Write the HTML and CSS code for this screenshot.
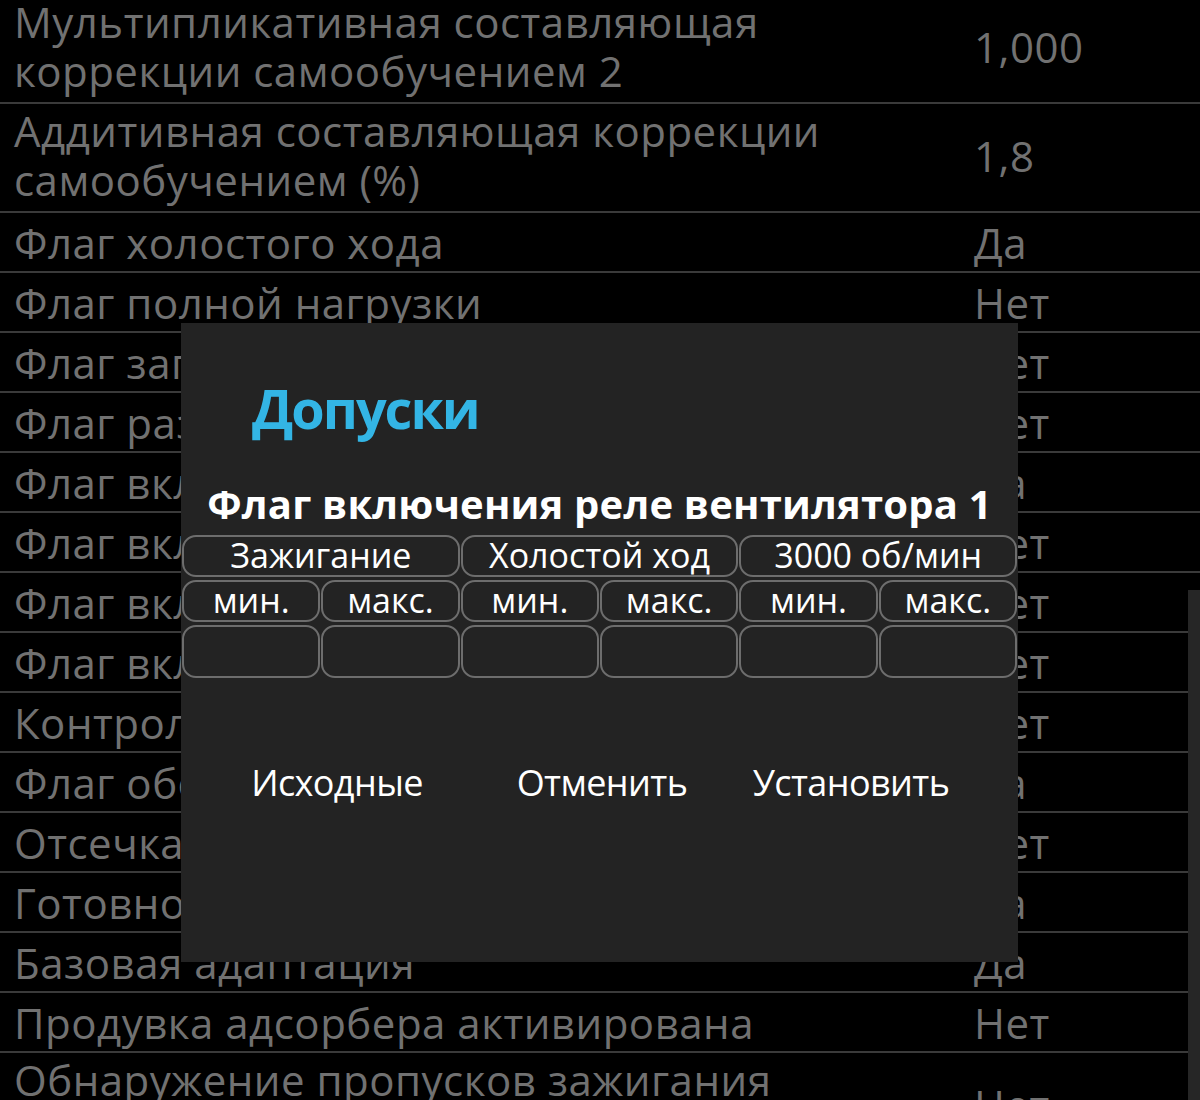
FILE: index.html
```html
<!DOCTYPE html>
<html lang="ru">
<head>
<meta charset="utf-8">
<title>Допуски</title>
<link rel="stylesheet" href="styles.css">
</head>
<body>
<div class="list">
  <div class="row tall"><div class="label">Мультипликативная составляющая<br>коррекции самообучением 2</div><div class="value">1,000</div></div>
  <div class="row tall"><div class="label">Аддитивная составляющая коррекции<br>самообучением (%)</div><div class="value">1,8</div></div>
  <div class="row"><div class="label">Флаг холостого хода</div><div class="value">Да</div></div>
  <div class="row"><div class="label">Флаг полной нагрузки</div><div class="value">Нет</div></div>
  <div class="row"><div class="label">Флаг запрета подачи топлива</div><div class="value">Нет</div></div>
  <div class="row"><div class="label">Флаг разрешения продувки</div><div class="value">Нет</div></div>
  <div class="row"><div class="label">Флаг включения реле бензонасоса</div><div class="value">Да</div></div>
  <div class="row"><div class="label">Флаг включения реле вентилятора 1</div><div class="value">Нет</div></div>
  <div class="row"><div class="label">Флаг включения реле вентилятора 2</div><div class="value">Нет</div></div>
  <div class="row"><div class="label">Флаг включения кондиционера</div><div class="value">Нет</div></div>
  <div class="row"><div class="label">Контроль детонации</div><div class="value">Нет</div></div>
  <div class="row"><div class="label">Флаг обогащения по ускорению</div><div class="value">Да</div></div>
  <div class="row"><div class="label">Отсечка топлива</div><div class="value">Нет</div></div>
  <div class="row"><div class="label">Готовность датчика кислорода</div><div class="value">Да</div></div>
  <div class="row"><div class="label">Базовая адаптация</div><div class="value">Да</div></div>
  <div class="row"><div class="label">Продувка адсорбера активирована</div><div class="value">Нет</div></div>
  <div class="row tall"><div class="label">Обнаружение пропусков зажигания<br>активировано</div><div class="value">Нет</div></div>
</div>
<div class="scrollbar"></div>

<div class="dialog">
  <div class="title">Допуски</div>
  <div class="subtitle">Флаг включения реле вентилятора 1</div>
  <div class="table">
    <div class="cell head span2">Зажигание</div>
    <div class="cell head span2">Холостой ход</div>
    <div class="cell head span2">3000 об/мин</div>
    <div class="cell head">мин.</div>
    <div class="cell head">макс.</div>
    <div class="cell head">мин.</div>
    <div class="cell head">макс.</div>
    <div class="cell head">мин.</div>
    <div class="cell head">макс.</div>
    <div class="cell input"></div>
    <div class="cell input"></div>
    <div class="cell input"></div>
    <div class="cell input"></div>
    <div class="cell input"></div>
    <div class="cell input"></div>
  </div>
  <div class="buttons">
    <div class="btn">Исходные</div>
    <div class="btn">Отменить</div>
    <div class="btn">Установить</div>
  </div>
</div>
</body>
</html>
```
FILE: styles.css
```css
html, body {
  margin: 0;
  padding: 0;
  background: #000;
}
body {
  width: 1200px;
  height: 1100px;
  overflow: hidden;
  position: relative;
  font-family: "Open Sans", "Noto Sans", sans-serif;
}
.list {
  margin-top: -5px;
}
.row {
  display: grid;
  grid-template-columns: 974px 1fr;
  align-items: center;
  padding: 5px 0 4px;
  border-bottom: 2px solid #3a3a3a;
  color: #717171;
  font-size: 42px;
  line-height: 49px;
  letter-spacing: 0.5px;
  white-space: nowrap;
}
.row.tall {
  padding: 2px 0 7px;
}
.label {
  padding-left: 14px;
}
.scrollbar {
  position: absolute;
  right: 0;
  top: 590px;
  width: 12px;
  height: 510px;
  background: #262626;
}
.dialog {
  position: absolute;
  left: 181px;
  top: 323px;
  width: 837px;
  height: 639px;
  background: #232323;
  display: flex;
  flex-direction: column;
}
.title {
  margin: 57px 0 0 71px;
  color: #33b5e5;
  font-weight: 700;
  font-size: 54px;
  line-height: 56px;
  letter-spacing: -2px;
}
.subtitle {
  margin-top: 48px;
  color: #fff;
  font-weight: 700;
  font-size: 40px;
  line-height: 40px;
  letter-spacing: 0.2px;
  text-align: center;
  white-space: nowrap;
}
.table {
  margin: 11px 1px 0;
  display: grid;
  grid-template-columns: repeat(6, 1fr);
  grid-template-rows: 42px 42px 53px;
  gap: 3px 1px;
}
.cell {
  border: 2px solid #6d6d6d;
  border-radius: 14px;
  background: #232323;
  color: #fff;
  font-size: 34px;
  line-height: 37px;
  text-align: center;
  white-space: nowrap;
  overflow: hidden;
}
.span2 {
  grid-column: span 2;
}
.buttons {
  margin-top: 81px;
  display: grid;
  grid-template-columns: 312px 218px 280px;
}
.btn {
  color: #fff;
  font-size: 36px;
  line-height: 48px;
  letter-spacing: -0.6px;
  text-align: center;
  white-space: nowrap;
}
```
